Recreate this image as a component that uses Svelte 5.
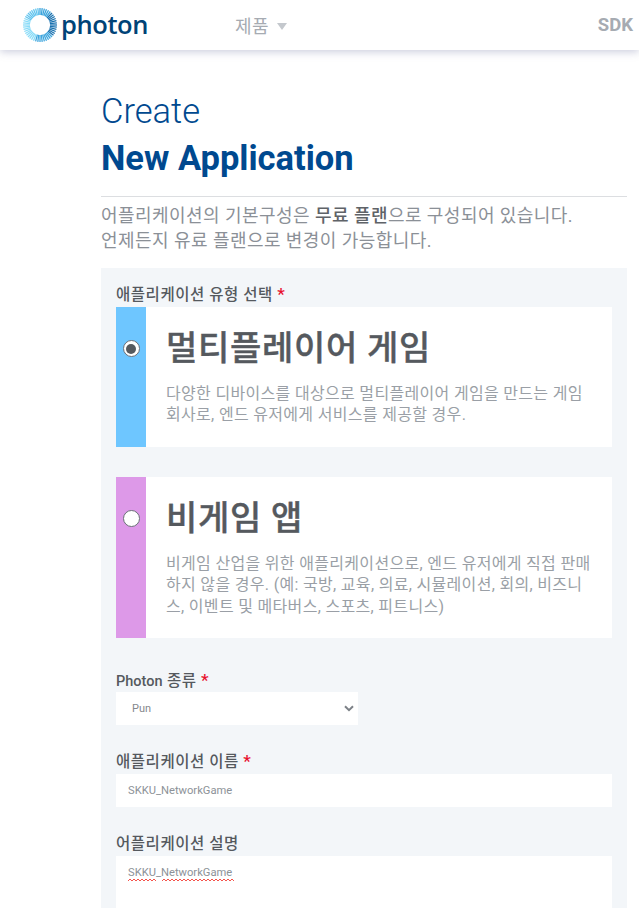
<script lang="ts">
  const rays = Array.from({ length: 48 }, (_, i) => i * 7.5);
  const rayColor = (a: number) => {
    if (a < 45) return '#3ba4dc';
    if (a < 135) return '#1a72b0';
    if (a < 200) return '#3fa6de';
    if (a < 300) return '#8bdcf8';
    return '#62c4ee';
  };
  // red spellcheck squiggle, skips the underscore like the browser does
  const squiggle = (from: number, to: number) => {
    let d = `M${from} 3`;
    for (let x = from; x < to; x += 4) d += `l2-2 2 2`;
    return d;
  };
</script>

<header class="topbar">
  <div class="logo">
    <svg class="logo-ring" width="36" height="36" viewBox="0 0 36 36">
      {#each rays as a}
        <line x1="18" y1="1" x2="18" y2="8" stroke={rayColor(a)} stroke-width="1.3" transform="rotate({a} 18 18)" />
      {/each}
    </svg>
    <span class="logo-text">photon</span>
  </div>
  <nav class="nav">
    <span class="nav-item">제품</span>
    <span class="caret"></span>
  </nav>
  <span class="nav-sdk">SDK</span>
</header>

<main class="page">
  <h1 class="title-light">Create</h1>
  <h2 class="title-bold">New Application</h2>
  <hr class="rule" />
  <p class="intro">
    어플리케이션의 기본구성은 <b>무료 플랜</b>으로 구성되어 있습니다.<br />
    언제든지 유료 플랜으로 변경이 가능합니다.
  </p>

  <form class="panel">
    <div class="label first">애플리케이션 유형 선택 <span class="req">*</span></div>

    <div class="card">
      <div class="card-side blue"><span class="radio checked"></span></div>
      <div class="card-body">
        <div class="card-title">멀티플레이어 게임</div>
        <p class="card-text">다양한 디바이스를 대상으로 멀티플레이어 게임을 만드는 게임 회사로, 엔드 유저에게 서비스를 제공할 경우.</p>
      </div>
    </div>

    <div class="card second">
      <div class="card-side purple"><span class="radio"></span></div>
      <div class="card-body">
        <div class="card-title">비게임 앱</div>
        <p class="card-text">비게임 산업을 위한 애플리케이션으로, 엔드 유저에게 직접 판매하지 않을 경우. (예: 국방, 교육, 의료, 시뮬레이션, 회의, 비즈니스, 이벤트 및 메타버스, 스포츠, 피트니스)</p>
      </div>
    </div>

    <div class="label type-label"><span class="latin">Photon</span> 종류 <span class="req">*</span></div>
    <div class="select">
      <span>Pun</span>
      <svg width="10" height="7" viewBox="0 0 10 7"><path d="M1 1.200 5 5.200l4-4" fill="none" stroke="#7c8187" stroke-width="2" /></svg>
    </div>

    <div class="label name-label">애플리케이션 이름 <span class="req">*</span></div>
    <div class="input">SKKU_NetworkGame</div>

    <div class="label desc-label">어플리케이션 설명</div>
    <div class="textarea">
      <span class="spell">
        SKKU_NetworkGame
        <svg class="squiggle" width="106" height="4" viewBox="0 0 106 4">
          <path d={squiggle(0, 28)} fill="none" stroke="#f4544c" />
          <path d={squiggle(34, 104)} fill="none" stroke="#f4544c" />
        </svg>
      </span>
    </div>
  </form>
</main>

<style>
  :global(body) {
    margin: 0;
    background: #fff;
    height: 908px;
    overflow: hidden;
    font-family: Roboto, "Noto Sans CJK KR", sans-serif;
  }

  .topbar {
    height: 50px;
    background: #fff;
    box-shadow: 0 2px 8px rgba(110, 115, 160, 0.35);
    display: flex;
    align-items: center;
    padding: 0 6px 0 22px;
    box-sizing: border-box;
  }

  .logo {
    display: flex;
    align-items: center;
    width: 213px;
    gap: 3px;
  }

  .logo-text {
    font-family: "Open Sans", sans-serif;
    font-size: 25.500px;
    font-weight: 600;
    letter-spacing: -0.4px;
    color: #004377;
    line-height: 1;
    margin-top: -1px;
  }

  .nav {
    display: flex;
    align-items: center;
    gap: 8px;
    flex: 1;
  }

  .nav-item {
    font-size: 18px;
    letter-spacing: 0.5px;
    color: #a6abb2;
  }

  .caret {
    width: 0;
    height: 0;
    border-left: 5px solid transparent;
    border-right: 5px solid transparent;
    border-top: 7px solid #c4c8cd;
    margin-top: 2px;
  }

  .nav-sdk {
    font-size: 18.500px;
    font-weight: 700;
    color: #a6abb2;
  }

  .page {
    margin: 0 12px 0 101px;
  }

  .title-light {
    margin: 0;
    padding-top: 42px;
    font-size: 34.500px;
    font-weight: 300;
    line-height: 38px;
    color: #00498f;
  }

  .title-bold {
    margin: 9px 0 0;
    font-size: 34.500px;
    font-weight: 700;
    line-height: 38px;
    color: #00498f;
  }

  .rule {
    margin: 19px 0 0;
    border: 0;
    border-top: 1px solid #dcdee1;
  }

  .intro {
    margin: 6px 0 0;
    font-size: 18px;
    line-height: 25px;
    letter-spacing: 0.45px;
    color: #8b9097;
  }

  .intro b {
    font-weight: 500;
    color: #5f6368;
  }

  .panel {
    margin-top: 15px;
    background: #f3f6f9;
    padding: 15px 15px 0;
    height: 640px;
  }

  .label {
    font-size: 15.500px;
    font-weight: 500;
    line-height: 20px;
    letter-spacing: 0.55px;
    color: #55595e;
  }

  .latin {
    font-size: 14.500px;
    letter-spacing: 0;
  }

  .req {
    font-size: 17px;
    line-height: 1;
    color: #e8112d;
  }

  .first {
    padding-top: 2px;
    height: 22px;
  }

  .card {
    display: flex;
    background: #fff;
    height: 140px;
  }

  .card.second {
    margin-top: 30px;
    height: 161px;
  }

  .card-side {
    width: 30px;
    flex-shrink: 0;
    display: flex;
    justify-content: center;
    padding-top: 33px;
    box-sizing: border-box;
  }

  .blue {
    background: #6ec6ff;
  }

  .purple {
    background: #dd99e8;
  }

  .radio {
    width: 15px;
    height: 15px;
    border-radius: 50%;
    background: #fff;
    border: 1px solid #6b7078;
    position: relative;
  }

  .radio.checked::after {
    content: '';
    position: absolute;
    inset: 2.5px;
    border-radius: 50%;
    background: #55595e;
  }

  .card-body {
    padding: 18px 20px 0;
    flex: 1;
  }

  .card-title {
    font-size: 34px;
    font-weight: 500;
    line-height: 46px;
    letter-spacing: 0.7px;
    -webkit-text-stroke: 0.4px #55595e;
    color: #55595e;
  }

  .card-text {
    margin: 12px 0 0;
    font-size: 16px;
    line-height: 21.300px;
    letter-spacing: 0.32px;
    word-break: break-all;
    color: #9a9fa6;
  }

  .type-label {
    margin-top: 33px;
  }

  .select {
    width: 242px;
    height: 33px;
    background: #fff;
    display: flex;
    align-items: center;
    justify-content: space-between;
    padding: 0 4px 0 16px;
    box-sizing: border-box;
    font-size: 11px;
    color: #85888d;
  }

  .name-label {
    margin-top: 27px;
  }

  .input {
    margin-top: 2px;
    height: 33px;
    background: #fff;
    display: flex;
    align-items: center;
    padding-left: 12px;
    font-size: 11.200px;
    color: #8d9298;
  }

  .desc-label {
    margin-top: 27px;
  }

  .textarea {
    margin-top: 2px;
    height: 80px;
    background: #fff;
    padding: 9px 12px;
    box-sizing: border-box;
    font-size: 11.200px;
    line-height: 16px;
    color: #8d9298;
  }

  .spell {
    position: relative;
    display: inline-block;
  }

  .squiggle {
    position: absolute;
    left: 0;
    top: 13px;
  }
</style>
